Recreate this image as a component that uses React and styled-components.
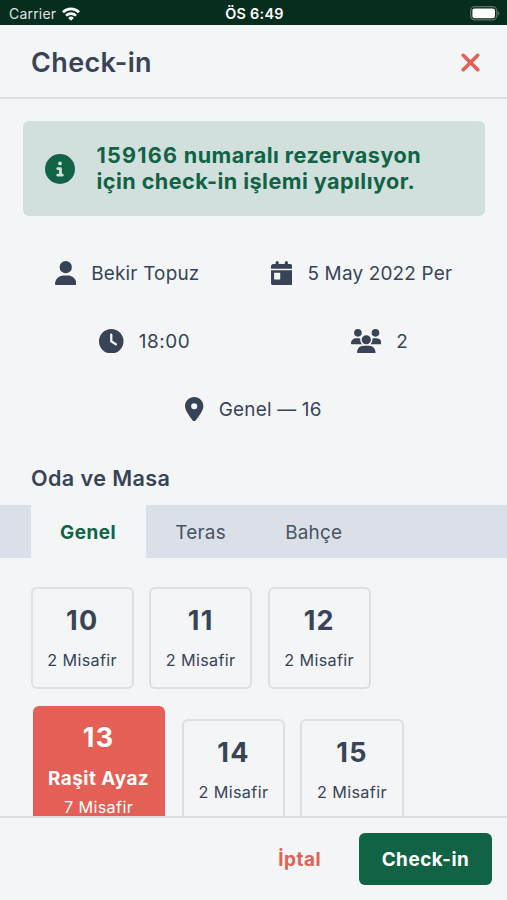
import React from 'react'
import styled, {createGlobalStyle} from 'styled-components'
import {
    FaCircleInfo,
    FaClock,
    FaLocationDot,
    FaUser,
    FaUsers,
    FaXmark,
} from 'react-icons/fa6'

const tabs = ['Genel', 'Teras', 'Bahçe'];

const tables = [
    {no: 10, guests: 2},
    {no: 11, guests: 2},
    {no: 12, guests: 2},
    {no: 13, guests: 7, name: 'Raşit Ayaz'},
    {no: 14, guests: 2},
    {no: 15, guests: 2},
];

function CalendarIcon() {
    return (
        <svg viewBox="0 0 448 512" fill="currentColor" fillRule="evenodd">
            <path d="M96 32a32 32 0 0 1 64 0v32h128V32a32 32 0 0 1 64 0v32h48c26.5 0 48 21.5 48 48v48H0v-48c0-26.5 21.5-48 48-48h48z" />
            <path d="M0 192h448v272c0 26.5-21.5 48-48 48H48c-26.5 0-48-21.5-48-48zM72 248c-5 0-8 3-8 8v120c0 5 3 8 8 8h112c5 0 8-3 8-8V256c0-5-3-8-8-8z" />
        </svg>
    )
}

function StatusBar() {
    return (
        <Status>
            <Carrier>
                Carrier
                <svg width="18" height="14" viewBox="0 0 18 14" fill="none" stroke="#fff" strokeWidth="2.6">
                    <path d="M1 5.2a11.4 11.4 0 0 1 16 0" />
                    <path d="M4 8.6a7.2 7.2 0 0 1 10 0" />
                    <path d="M9 13.8 6.2 10.9a4 4 0 0 1 5.6 0z" fill="#fff" stroke="none" />
                </svg>
            </Carrier>
            <Clock>ÖS 6:49</Clock>
            <Battery>
                <svg width="31" height="15" viewBox="0 0 31 15">
                    <rect x="1.7" y="0.7" width="26" height="13.2" rx="4" fill="none" stroke="#587267" strokeWidth="1.3" />
                    <rect x="3.4" y="2.4" width="22.6" height="9.8" rx="2.2" fill="#fff" />
                    <path d="M28.8 5v4.6c1-.4 1.6-1.3 1.6-2.3S29.8 5.4 28.8 5z" fill="#587267" />
                </svg>
            </Battery>
        </Status>
    )
}

function App() {

    const [activeTab,setActiveTab] = React.useState('Genel');

    return (
        <Screen>
            <GlobalStyle />
            <StatusBar />
            <Header>
                <Title>Check-in</Title>
                <CloseButton aria-label="Kapat"><FaXmark size={29} /></CloseButton>
            </Header>

            <Content>
                <Notice>
                    <FaCircleInfo size={30} />
                    <p><ReservationNo>159166</ReservationNo> numaralı rezervasyon<br />için check-in işlemi yapılıyor.</p>
                </Notice>

                <Details>
                    <Detail $icon={21.5}><FaUser />Bekir Topuz</Detail>
                    <Detail $icon={21.5}><CalendarIcon />5 May 2022 Per</Detail>
                    <Detail $icon={24.5}><FaClock /><Time>18:00</Time></Detail>
                    <Detail $icon={30.6}><FaUsers />2</Detail>
                    <Detail $icon={18.4}><FaLocationDot />Genel — 16</Detail>
                </Details>

                <SectionTitle>Oda ve Masa</SectionTitle>
                <Tabs>
                    {tabs.map(tab => (
                        <Tab key={tab} $active={tab === activeTab} onClick={()=>setActiveTab(tab)}>{tab}</Tab>
                    ))}
                </Tabs>

                <Tables>
                    {tables.map(table => (
                        <Table key={table.no} $busy={!!table.name}>
                            <TableNo>{table.no}</TableNo>
                            {table.name && <GuestName>{table.name}</GuestName>}
                            <Guests>{table.guests} Misafir</Guests>
                        </Table>
                    ))}
                </Tables>
            </Content>

            <Footer>
                <CancelButton>İptal</CancelButton>
                <SubmitButton>Check-in</SubmitButton>
            </Footer>
        </Screen>
    )
}

export default App

const GlobalStyle = createGlobalStyle`
    *{
        box-sizing:border-box;
    }
    body{
        margin:0;
        background:#f3f5f7;
    }
    h1, h2, p{
        margin:0;
    }
    button{
        border:0;
        padding:0;
        background:none;
        font:inherit;
        letter-spacing:inherit;
        color:inherit;
        cursor:pointer;
    }
    svg{
        display:block;
        flex-shrink:0;
    }
`

const Screen = styled.div`
    height:900px;
    display:flex;
    flex-direction:column;
    overflow:hidden;
    background:#f3f5f7;
    color:#384456;
    font-family:Inter, "Liberation Sans", sans-serif;
    font-size:18.9px;
    letter-spacing:0.2px;
`

const Status = styled.div`
    height:25px;
    flex-shrink:0;
    display:grid;
    grid-template-columns:1fr auto 1fr;
    align-items:center;
    padding:2px 7px 0 9px;
    background:#062d1e;
    color:#fff;
    font-size:14px;
    letter-spacing:0.2px;
`

const Carrier = styled.div`
    display:flex;
    align-items:center;
    gap:6px;
    color:#dde5e1;
`

const Clock = styled.div`
    font-size:14.4px;
    font-weight:600;
    letter-spacing:0.3px;
`

const Battery = styled.div`
    display:flex;
    justify-content:flex-end;
`

const Header = styled.header`
    height:74px;
    flex-shrink:0;
    display:flex;
    align-items:center;
    justify-content:space-between;
    padding:2px 22px 0 31px;
    border-bottom:2px solid #d9dee1;
`

const Title = styled.h1`
    padding-top:1px;
    font-size:27px;
    font-weight:600;
    line-height:32px;
    letter-spacing:0.35px;
`

const CloseButton = styled.button`
    color:#e45f55;
`

const Content = styled.main`
    flex:1;
    min-height:0;
    overflow:hidden;
`

const Notice = styled.div`
    display:flex;
    align-items:center;
    gap:21.5px;
    height:95px;
    margin:22px 22px 0 23px;
    padding:0 22px;
    border-radius:6px;
    background:#d1e0dc;
    color:#106345;
    font-size:21.6px;
    font-weight:700;
    line-height:25.5px;
    letter-spacing:0.45px;
`

const ReservationNo = styled.span`
    letter-spacing:1.2px;
`

const Details = styled.div`
    display:flex;
    flex-wrap:wrap;
    justify-content:space-around;
    row-gap:44px;
    padding:45px 19px 0;
`

const Detail = styled.div`
    display:flex;
    align-items:center;
    gap:15px;
    height:24px;
    margin:0 32px;
    white-space:nowrap;

    svg{
        width:${props=> props.$icon}px;
        height:24.5px;
    }
`

const Time = styled.span`
    letter-spacing:0.6px;
`

const SectionTitle = styled.h2`
    margin:43px 31px 0;
    font-size:21.6px;
    font-weight:600;
    line-height:28px;
    letter-spacing:0.4px;
`

const Tabs = styled.div`
    display:flex;
    gap:0.7px;
    height:53px;
    margin-top:13px;
    padding-left:31px;
    background:#dadfe8;
`

const Tab = styled.button`
    && {
        padding:1px 29.5px 0 29px;
        background:${props=> props.$active ? '#f3f5f7' : 'transparent'};
        color:${props=> props.$active ? '#106345' : '#4a5362'};
        font-weight:${props=> props.$active ? 700 : 400};
        letter-spacing:${props=> props.$active ? '0.5px' : '0.25px'};
    }
`

const Tables = styled.div`
    display:flex;
    flex-wrap:wrap;
    align-items:center;
    gap:17px 15.3px;
    padding:29px 31px 0 30.6px;
`

const Table = styled.div`
    display:flex;
    flex-direction:column;
    align-items:center;
    width:${props=> props.$busy ? '132px' : '103.2px'};
    height:${props=> props.$busy ? '127px' : '102px'};
    margin:${props=> props.$busy ? '0 2px' : '0'};
    padding-top:15px;
    border:${props=> props.$busy ? '0' : '2px solid #dbe0e2'};
    border-radius:6px;
    background:${props=> props.$busy ? '#e45f55' : 'transparent'};
    color:${props=> props.$busy ? '#fff' : 'inherit'};
`

const TableNo = styled.div`
    font-size:27px;
    font-weight:700;
    line-height:33px;
    letter-spacing:1.2px;
    margin-bottom:13px;
`

const GuestName = styled.div`
    font-weight:700;
    line-height:24px;
    letter-spacing:0.5px;
    margin-bottom:6px;
`

const Guests = styled.div`
    font-size:16.2px;
    line-height:20px;
    letter-spacing:0.35px;
`

const Footer = styled.footer`
    height:84px;
    flex-shrink:0;
    display:flex;
    align-items:center;
    justify-content:flex-end;
    gap:38px;
    padding-right:15px;
    border-top:2px solid #dbe0e2;
    font-weight:700;
    letter-spacing:0.5px;
`

const CancelButton = styled.button`
    && {
        color:#e45f55;
    }
`

const SubmitButton = styled.button`
    && {
        width:133px;
        height:52px;
        border-radius:6px;
        background:#106345;
        color:#fff;
    }
`
